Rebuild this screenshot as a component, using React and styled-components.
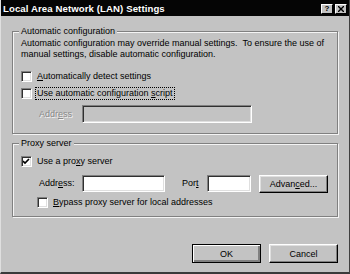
import React from "react";
import styled, { createGlobalStyle } from "styled-components";

const Global = createGlobalStyle`
	html, body {
		margin: 0;
		padding: 0;
		background: #c3c3c3;
	}
	body {
		font-family: "Liberation Sans", Arial, sans-serif;
		font-size: 9px;
		color: #000;
	}
`;

const Window = styled.div`
	box-sizing: border-box;
	width: 350px;
	height: 274px;
	background: #c3c3c3;
	border-left: 1px solid #dfdfdf;
	border-right: 1px solid #404040;
	border-bottom: 2px solid #3a3a3a;
	display: flex;
	flex-direction: column;
	overflow: hidden;
`;

const TitleBar = styled.div`
	height: 16px;
	background: #050505;
	color: #fff;
	display: flex;
	align-items: center;
	justify-content: space-between;
	padding: 0 2px 0 2px;
`;

const TitleText = styled.span`
	font-weight: bold;
	font-size: 9.6px;
	letter-spacing: 0.1px;
`;

const TitleButtons = styled.div`
	display: flex;
	gap: 2px;
	padding-top: 1px;
`;

const TitleButton = styled.span`
	box-sizing: border-box;
	width: 12px;
	height: 10px;
	background: #c3c3c3;
	border: 1px solid;
	border-color: #fff #000 #000 #fff;
	display: flex;
	align-items: center;
	justify-content: center;
	color: #000;
	font-weight: bold;
	font-size: 8px;
	line-height: 1;
`;

const Content = styled.div`
	padding: 15px 11px 0 11px;
	display: flex;
	flex-direction: column;
`;

const Group = styled.div`
	position: relative;
	box-sizing: border-box;
	height: ${(p) => p.$h}px;
	border: 1px solid #808080;
	box-shadow: inset 1px 1px 0 #f4f4f4, 1px 1px 0 #f4f4f4;
	padding: ${(p) => p.$pad};
	margin-bottom: ${(p) => p.$mb || 0}px;
	display: flex;
	flex-direction: column;
`;

const Legend = styled.span`
	position: absolute;
	top: -6px;
	left: 6px;
	padding: 0 2px;
	background: #c3c3c3;
	line-height: 11px;
`;

const Para = styled.p`
	margin: 0;
	line-height: 11px;
	white-space: pre;
`;

const Row = styled.div`
	display: flex;
	align-items: center;
	height: ${(p) => p.$h || 13}px;
	margin-top: ${(p) => p.$mt || 0}px;
	padding-left: ${(p) => p.$indent || 0}px;
`;

const Box = styled.span`
	box-sizing: border-box;
	width: 11px;
	height: 11px;
	background: #fff;
	border: 1px solid;
	border-color: #808080 #fff #fff #808080;
	box-shadow: inset 1px 1px 0 #303030, inset -1px -1px 0 #dfdfdf;
	display: flex;
	align-items: center;
	justify-content: center;
	margin-right: 3px;
	flex-shrink: 0;
`;

const Label = styled.span`
	line-height: 11px;
	padding: 0 1px;
	border: 1px ${(p) => (p.$focus ? "dotted #000" : "solid transparent")};
	color: ${(p) => (p.$disabled ? "#8a8a8a" : "#000")};
	text-shadow: ${(p) => (p.$disabled ? "1px 1px 0 #f4f4f4" : "none")};
	width: ${(p) => (p.$w ? `${p.$w}px` : "auto")};
	margin-left: ${(p) => p.$ml || 0}px;
	flex-shrink: 0;
`;

const Field = styled.span`
	box-sizing: border-box;
	display: block;
	width: ${(p) => p.$w}px;
	height: ${(p) => p.$h}px;
	background: ${(p) => (p.$disabled ? "#c3c3c3" : "#fff")};
	border: 1px solid;
	border-color: #808080 #fff #fff #808080;
	box-shadow: inset 1px 1px 0 #303030, inset -1px -1px 0 #dfdfdf;
	flex-shrink: 0;
`;

const Button = styled.span`
	box-sizing: border-box;
	width: 69px;
	height: ${(p) => p.$h || 19}px;
	display: flex;
	align-items: center;
	justify-content: center;
	background: #c3c3c3;
	border: 1px solid;
	border-color: ${(p) => (p.$default ? "#000" : "#fff #000 #000 #fff")};
	box-shadow: ${(p) =>
		p.$default
			? "inset 1px 1px 0 #fff, inset -2px -2px 0 #808080"
			: "inset -1px -1px 0 #808080, inset 1px 1px 0 #dfdfdf"};
	flex-shrink: 0;
	margin-left: ${(p) => p.$ml || 0}px;
`;

const Footer = styled.div`
	display: flex;
	justify-content: flex-end;
	padding-top: 27px;
`;

const Check = () => (
	<svg width="7" height="7" viewBox="0 0 7 7">
		<path d="M0 3 L2 5 L6 1" stroke="#000" strokeWidth="1.6" fill="none" />
	</svg>
);

const Ul = styled.u`
	text-decoration: underline;
	text-underline-offset: 1px;
`;

const CheckRow = ({ checked, children, focus, mt, indent }) => (
	<Row $mt={mt} $indent={indent}>
		<Box>{checked && <Check />}</Box>
		<Label $focus={focus}>{children}</Label>
	</Row>
);

export default function App() {
	return (
		<>
			<Global />
			<Window>
				<TitleBar>
					<TitleText>Local Area Network (LAN) Settings</TitleText>
					<TitleButtons>
						<TitleButton>?</TitleButton>
						<TitleButton>
							<svg width="6" height="6" viewBox="0 0 6 6">
								<path d="M0 0 L6 6 M6 0 L0 6" stroke="#000" strokeWidth="1.4" />
							</svg>
						</TitleButton>
					</TitleButtons>
				</TitleBar>
				<Content>
					<Group $h={103} $pad="6px 0 0 8px" $mb={9}>
						<Legend>Automatic configuration</Legend>
						<Para>
							{"Automatic configuration may override manual settings.  To ensure the use of\nmanual settings, disable automatic configuration."}
						</Para>
						<CheckRow mt={10}>
							<Ul>A</Ul>utomatically detect settings
						</CheckRow>
						<CheckRow mt={4} focus>
							Use automatic configuration <Ul>s</Ul>cript
						</CheckRow>
						<Row $h={18} $mt={5} $indent={16}>
							<Label $disabled $w={41}>
								Addr<Ul>e</Ul>ss
							</Label>
							<Field $disabled $w={170} $h={18} />
						</Row>
					</Group>
					<Group $h={74} $pad="11px 0 0 8px">
						<Legend>Proxy server</Legend>
						<CheckRow checked>
							Use a pro<Ul>x</Ul>y server
						</CheckRow>
						<Row $h={17} $mt={7} $indent={16}>
							<Label $w={41}>
								Addr<Ul>e</Ul>ss:
							</Label>
							<Field $w={83} $h={17} />
							<Label $ml={15} $w={23}>
								Por<Ul>t</Ul>
							</Label>
							<Field $w={44} $h={17} />
							<Button $h={18} $ml={8}>
								Advan<Ul>c</Ul>ed...
							</Button>
						</Row>
						<CheckRow mt={4} indent={16}>
							<Ul>B</Ul>ypass proxy server for local addresses
						</CheckRow>
					</Group>
					<Footer>
						<Button $default>OK</Button>
						<Button $ml={8}>Cancel</Button>
					</Footer>
				</Content>
			</Window>
		</>
	);
}
